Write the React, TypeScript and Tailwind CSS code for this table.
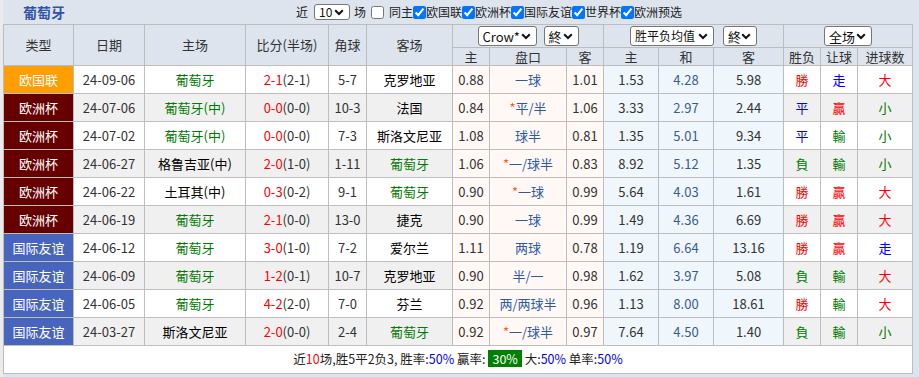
import React from "react";

type Row = {
  type: string;
  date: string;
  home: string;
  homeG: boolean;
  score: string;
  half: string;
  corner: string;
  away: string;
  awayG: boolean;
  o1: string;
  pk: string;
  star: boolean;
  o2: string;
  w: string;
  d: string;
  l: string;
  r: string;
  rq: string;
  dx: string;
};

const rows: Row[] = [
  { type: "欧国联", date: "24-09-06", home: "葡萄牙", homeG: true, score: "2-1", half: "(2-1)", corner: "5-7", away: "克罗地亚", awayG: false, o1: "0.88", pk: "一球", star: false, o2: "1.01", w: "1.53", d: "4.28", l: "5.98", r: "勝", rq: "走", dx: "大" },
  { type: "欧洲杯", date: "24-07-06", home: "葡萄牙(中)", homeG: true, score: "0-0", half: "(0-0)", corner: "10-3", away: "法国", awayG: false, o1: "0.84", pk: "平/半", star: true, o2: "1.06", w: "3.33", d: "2.97", l: "2.44", r: "平", rq: "贏", dx: "小" },
  { type: "欧洲杯", date: "24-07-02", home: "葡萄牙(中)", homeG: true, score: "0-0", half: "(0-0)", corner: "7-3", away: "斯洛文尼亚", awayG: false, o1: "1.08", pk: "球半", star: false, o2: "0.81", w: "1.35", d: "5.01", l: "9.34", r: "平", rq: "輸", dx: "小" },
  { type: "欧洲杯", date: "24-06-27", home: "格鲁吉亚(中)", homeG: false, score: "2-0", half: "(1-0)", corner: "1-11", away: "葡萄牙", awayG: true, o1: "1.06", pk: "一/球半", star: true, o2: "0.83", w: "8.92", d: "5.12", l: "1.35", r: "負", rq: "輸", dx: "小" },
  { type: "欧洲杯", date: "24-06-22", home: "土耳其(中)", homeG: false, score: "0-3", half: "(0-2)", corner: "9-1", away: "葡萄牙", awayG: true, o1: "0.90", pk: "一球", star: true, o2: "0.99", w: "5.64", d: "4.03", l: "1.61", r: "勝", rq: "贏", dx: "大" },
  { type: "欧洲杯", date: "24-06-19", home: "葡萄牙", homeG: true, score: "2-1", half: "(0-0)", corner: "13-0", away: "捷克", awayG: false, o1: "0.90", pk: "一球", star: false, o2: "0.99", w: "1.49", d: "4.36", l: "6.69", r: "勝", rq: "贏", dx: "大" },
  { type: "国际友谊", date: "24-06-12", home: "葡萄牙", homeG: true, score: "3-0", half: "(1-0)", corner: "7-2", away: "爱尔兰", awayG: false, o1: "1.11", pk: "两球", star: false, o2: "0.78", w: "1.19", d: "6.64", l: "13.16", r: "勝", rq: "贏", dx: "走" },
  { type: "国际友谊", date: "24-06-09", home: "葡萄牙", homeG: true, score: "1-2", half: "(0-1)", corner: "10-7", away: "克罗地亚", awayG: false, o1: "0.90", pk: "半/一", star: false, o2: "0.98", w: "1.62", d: "3.97", l: "5.08", r: "負", rq: "輸", dx: "大" },
  { type: "国际友谊", date: "24-06-05", home: "葡萄牙", homeG: true, score: "4-2", half: "(2-0)", corner: "7-0", away: "芬兰", awayG: false, o1: "0.92", pk: "两/两球半", star: false, o2: "0.96", w: "1.13", d: "8.00", l: "18.61", r: "勝", rq: "輸", dx: "大" },
  { type: "国际友谊", date: "24-03-27", home: "斯洛文尼亚", homeG: false, score: "2-0", half: "(0-0)", corner: "2-4", away: "葡萄牙", awayG: true, o1: "0.92", pk: "一/球半", star: true, o2: "0.97", w: "7.64", d: "4.50", l: "1.40", r: "負", rq: "輸", dx: "小" },
];

const typeBg = (t: string) =>
  t === "欧国联" ? "bg-[#ff9e00]" : t === "欧洲杯" ? "bg-[#660000]" : "bg-[#4765bc]";

const resColor = (s: string) =>
  s === "勝" || s === "贏" || s === "大"
    ? "text-[#ff0000]"
    : s === "平" || s === "走"
    ? "text-[#0000ff]"
    : "text-[#007a00]";

const Chevron = () => (
  <svg width="10" height="7" viewBox="0 0 10 7" className="shrink-0">
    <path d="M1.2 1.3 L5 5 L8.8 1.3" fill="none" stroke="#111" strokeWidth="2" />
  </svg>
);

const Sel = ({ label, cls }: { label: string; cls: string }) => (
  <div
    className={
      "flex items-center justify-between whitespace-nowrap bg-white border border-[#767676] rounded-[3px] pl-[4px] pr-[5px] text-[#111] " +
      cls
    }
  >
    <span className="leading-none">{label}</span>
    <Chevron />
  </div>
);

const Check = ({ checked }: { checked: boolean }) => (
  <input type="checkbox" defaultChecked={checked} className="m-0 w-[13px] h-[13px] align-middle" />
);

export default function App() {
  const bd = "border border-[#bdbdbd]";
  return (
    <div className="w-[919px] h-[377px] flex bg-[#dde4ee] font-['Noto_Sans_CJK_SC',sans-serif] text-[13px] text-[#333]">
      <div className="w-[3px] bg-[#ebebeb]" />
      <div className="flex-1 flex flex-col">
        <div className="h-[24px] flex items-center">
          <div className="pl-[20px] w-[293px] font-bold text-[14px] text-[#2f54a6]">葡萄牙</div>
          <div className="flex items-center text-[12px] text-[#222]">
            <span>近</span>
            <Sel label="10" cls="ml-[6px] w-[36px] h-[16px] text-[12px]" />
            <span className="ml-[4px]">场</span>
            <span className="ml-[5px] flex items-center"><Check checked={false} /></span>
            <span className="ml-[5px]">同主</span>
            <Check checked={true} />
            <span>欧国联</span>
            <Check checked={true} />
            <span>欧洲杯</span>
            <Check checked={true} />
            <span>国际友谊</span>
            <Check checked={true} />
            <span>世界杯</span>
            <Check checked={true} />
            <span>欧洲预选</span>
          </div>
        </div>
        <table className="table-fixed border-collapse w-[910px] text-center">
          <colgroup>
            <col className="w-[70px]" />
            <col className="w-[71px]" />
            <col className="w-[101px]" />
            <col className="w-[83px]" />
            <col className="w-[38px]" />
            <col className="w-[86px]" />
            <col className="w-[37px]" />
            <col className="w-[77px]" />
            <col className="w-[37px]" />
            <col className="w-[55px]" />
            <col className="w-[55px]" />
            <col className="w-[70px]" />
            <col className="w-[37px]" />
            <col className="w-[37px]" />
            <col className="w-[55px]" />
          </colgroup>
          <thead>
            <tr className="h-[23px]">
              <th rowSpan={2} className={bd + " font-normal"}>类型</th>
              <th rowSpan={2} className={bd + " font-normal"}>日期</th>
              <th rowSpan={2} className={bd + " font-normal"}>主场</th>
              <th rowSpan={2} className={bd + " font-normal"}>比分(半场)</th>
              <th rowSpan={2} className={bd + " font-normal"}>角球</th>
              <th rowSpan={2} className={bd + " font-normal"}>客场</th>
              <th colSpan={3} className={bd + " font-normal p-0"}>
                <div className="flex justify-center items-center gap-[7px]">
                  <Sel label="Crow*" cls="w-[59px] h-[20px]" />
                  <Sel label="終" cls="w-[35px] h-[20px]" />
                </div>
              </th>
              <th colSpan={3} className={bd + " font-normal p-0"}>
                <div className="flex justify-center items-center gap-[9px]">
                  <Sel label="胜平负均值" cls="w-[84px] h-[20px] text-[12px]" />
                  <Sel label="終" cls="w-[34px] h-[20px]" />
                </div>
              </th>
              <th colSpan={3} className={bd + " font-normal p-0"}>
                <div className="flex justify-center items-center">
                  <Sel label="全场" cls="w-[48px] h-[20px]" />
                </div>
              </th>
            </tr>
            <tr className="h-[18px]">
              {["主", "盘口", "客", "主", "和", "客", "胜负", "让球", "进球数"].map((t, i) => (
                <th key={i} className={bd + " font-normal leading-[16px]"}>{t}</th>
              ))}
            </tr>
          </thead>
          <tbody>
            {rows.map((r, i) => {
              const rb = i % 2 === 0 ? "bg-white" : "bg-[#f0f0f0]";
              return (
                <tr key={i} className="h-[28px]">
                  <td className={bd + " text-white " + typeBg(r.type)}>{r.type}</td>
                  <td className={bd + " " + rb}>{r.date}</td>
                  <td className={bd + " " + rb + (r.homeG ? " text-[#007a00]" : " text-black")}>{r.home}</td>
                  <td className={bd + " " + rb}>
                    <span className="text-[#ff0000]">{r.score}</span>
                    <span className="text-[#333]">{r.half}</span>
                  </td>
                  <td className={bd + " " + rb}>{r.corner}</td>
                  <td className={bd + " " + rb + (r.awayG ? " text-[#007a00]" : " text-black")}>{r.away}</td>
                  <td className={bd + " bg-[#fff8f5] text-[#333]"}>{r.o1}</td>
                  <td className={bd + " bg-[#fff8f5] text-[#2c5aa6]"}>
                    {r.star && <span className="text-[#ff5a1f]">*</span>}
                    {r.pk}
                  </td>
                  <td className={bd + " bg-[#fff8f5] text-[#333]"}>{r.o2}</td>
                  <td className={bd + " bg-[#eff7fc] text-[#333]"}>{r.w}</td>
                  <td className={bd + " bg-[#eff7fc] text-[#3a5a96]"}>{r.d}</td>
                  <td className={bd + " bg-[#eff7fc] text-[#333]"}>{r.l}</td>
                  <td className={bd + " " + rb + " " + resColor(r.r)}>{r.r}</td>
                  <td className={bd + " " + rb + " " + resColor(r.rq)}>{r.rq}</td>
                  <td className={bd + " " + rb + " " + resColor(r.dx)}>{r.dx}</td>
                </tr>
              );
            })}
            <tr className="h-[28px]">
              <td colSpan={15} className={bd + " bg-white text-[#222] text-[12.5px]"}>
                <span>近</span>
                <span className="text-[#ff0000]">10</span>
                <span>场,胜5平2负3, 胜率:</span>
                <span className="text-[#0000ff]">50%</span>
                <span> 贏率:</span>
                <span className="inline-block ml-[3px] px-[4px] bg-[#008000] text-white leading-[17px]">30%</span>
                <span> 大:</span>
                <span className="text-[#0000ff]">50%</span>
                <span> 单率:</span>
                <span className="text-[#0000ff]">50%</span>
              </td>
            </tr>
          </tbody>
        </table>
      </div>
    </div>
  );
}
